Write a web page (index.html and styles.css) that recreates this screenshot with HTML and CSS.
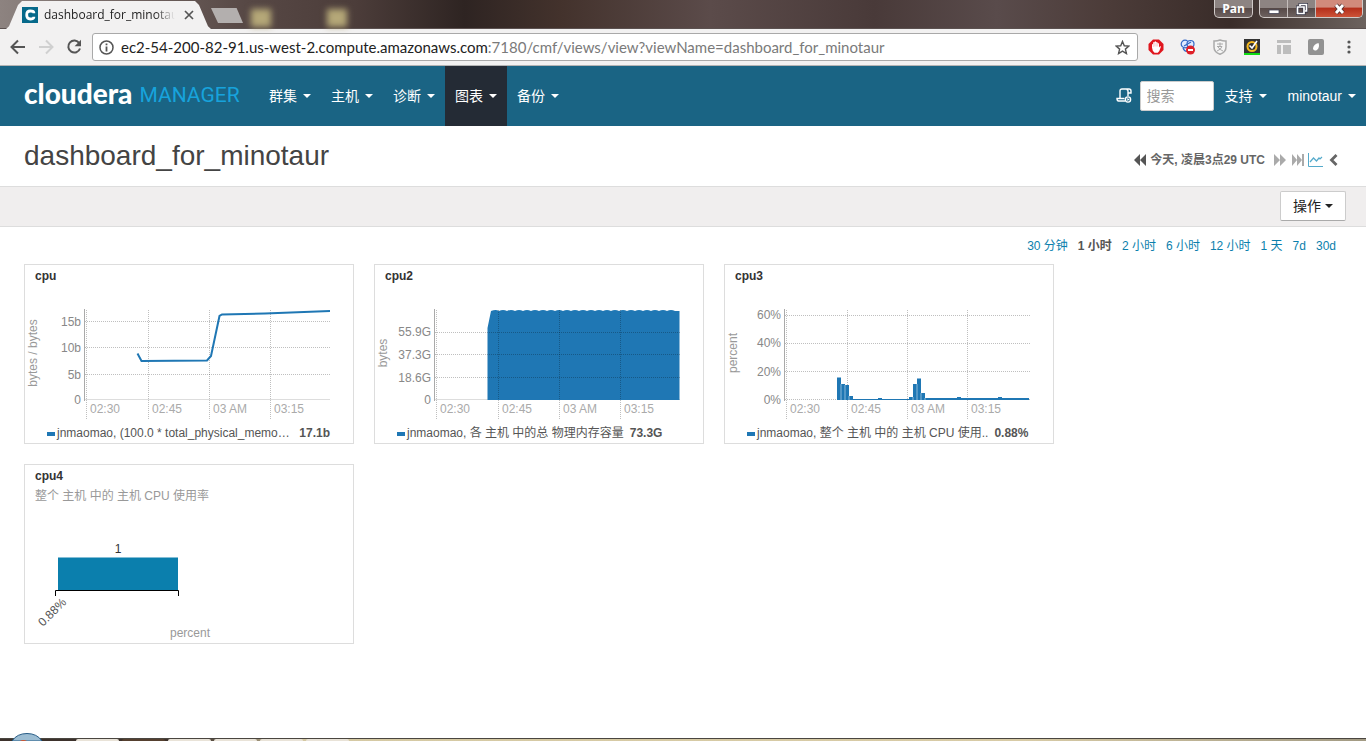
FILE: index.html
```html
<!DOCTYPE html>
<html lang="zh-CN">
<head>
<meta charset="utf-8">
<title>dashboard_for_minotaur</title>
<link rel="stylesheet" href="styles.css">
</head>
<body>
<div class="titlebar">
  <div class="tab">
    <svg class="favicon" width="16" height="16" viewBox="0 0 16 16"><path fill="#06698a" d="M0 0h16v16H0z"/><path d="M11.8 6.3V5.400Q11.300 4 8.300 4Q4.700 4 4.700 8T8.300 12Q11.300 12 11.800 10.300V9.700" fill="none" stroke="#fff" stroke-width="2.800"/></svg>
    <span class="tab-title">dashboard_for_minotaur</span>
    <button class="tab-close" aria-label="Close tab"><svg width="10" height="10" viewBox="0 0 10 10"><path d="M1 1l8 8M9 1l-8 8" stroke="#555" stroke-width="1.700"/></svg></button>
  </div>
  <button class="new-tab" aria-label="New tab"></button>
  <span class="desk-icon"></span><span class="desk-icon second"></span>
  <div class="window-buttons">
    <button class="glass user">Pan</button>
    <div class="glass group">
      <button aria-label="Minimize"><svg width="12" height="12" viewBox="0 0 12 12"><path d="M1 7h10v3.500H1z" fill="#fff" stroke="#445" stroke-width=".8"/></svg></button>
      <button aria-label="Restore"><svg width="12" height="12" viewBox="0 0 12 12"><path d="M4 3V1.500h6.500V8H9M1.500 4H8v6.500H1.500z" fill="none" stroke="#334" stroke-width="3"/><path d="M4 3V1.500h6.500V8H9M1.500 4H8v6.500H1.500z" fill="none" stroke="#fff" stroke-width="1.700"/></svg></button>
      <button class="close" aria-label="Close"><svg width="13" height="12" viewBox="0 0 13 12"><path d="M3 2l7 8M10 2l-7 8" stroke="#533" stroke-width="4.500"/><path d="M3 2l7 8M10 2l-7 8" stroke="#fff" stroke-width="2.800"/></svg></button>
    </div>
  </div>
</div>
<div class="toolbar">
  <div class="nav-buttons">
    <button aria-label="Back"><svg width="16" height="16" viewBox="0 0 16 16"><path d="M15 8H2M8 1.500L1.500 8L8 14.500" fill="none" stroke="#555" stroke-width="2"/></svg></button>
    <button aria-label="Forward"><svg width="16" height="16" viewBox="0 0 16 16"><path d="M1 8h13M8 1.500L14.500 8L8 14.500" fill="none" stroke="#d0d0d0" stroke-width="2"/></svg></button>
    <button aria-label="Reload"><svg width="16" height="16" viewBox="0 0 16 16"><path d="M13.300 4.200A6 6 0 1 0 14 9.500" fill="none" stroke="#555" stroke-width="2"/><path d="M15 .8v6.400H8.600z" fill="#555"/></svg></button>
  </div>
  <div class="omnibox">
    <svg width="15" height="15" viewBox="0 0 15 15"><circle cx="7.500" cy="7.500" r="6.500" fill="none" stroke="#555" stroke-width="1.500"/><path d="M6.600 3.500h1.800v1.800H6.600zM6.600 6.500h1.800v5H6.600z" fill="#555"/></svg>
    <div class="url" role="textbox" aria-label="Address" contenteditable="true" spellcheck="false">ec2-54-200-82-91.us-west-2.compute.amazonaws.com<span>:7180/cmf/views/view?viewName=dashboard_for_minotaur</span></div>
    <button aria-label="Bookmark"><svg width="15" height="15" viewBox="0 0 16 16"><path d="M8 1.500l1.900 4.600 4.900.4-3.700 3.200 1.100 4.800L8 11.900l-4.200 2.600 1.100-4.800L1.200 6.500l4.900-.4z" fill="none" stroke="#555" stroke-width="1.500"/></svg></button>
  </div>
  <div class="extensions">
    <button aria-label="AdBlock"><svg width="16" height="16" viewBox="0 0 16 16"><path d="M5 .5h6L15.500 5v6L11 15.500H5L.5 11V5z" fill="#e0161e"/><path d="M4 8.500V5.500q.7-.8 1.200 0V3.500q.7-.9 1.400 0V2.700q.8-.9 1.500 0v.8q.8-.8 1.500 0v1q.8-.7 1.400 0V8.500l1-1.200q.8-.4 1 .3L11.300 12l-1.500 1.800H6.500L4.800 11.800z" fill="#fff"/><path d="M5.300 5.500v2.500M6.800 4v3.500M8.200 4v3.500M9.700 5v2.500" stroke="#e88" stroke-width=".4"/></svg></button>
    <button aria-label="Proxy"><svg width="16" height="16" viewBox="0 0 16 16"><g fill="#dfeaff" stroke="#3268c7" stroke-width="1.200"><circle cx="5" cy="5" r="3.800"/><circle cx="10.500" cy="5" r="3.500"/><path d="M3 9q1 3 4 3.500M4 7l7-4"/></g><circle cx="10.500" cy="11" r="4.500" fill="#df2029"/><path d="M8 10h5v2H8z" fill="#fff"/></svg></button>
    <button aria-label="Alipay"><svg width="16" height="16" viewBox="0 0 16 16"><path d="M8 1q3 1.200 6 1v6q0 5-6 7.300Q2 13 2 8V2q3 .2 6-1z" fill="#f5f5f5" stroke="#aaa" stroke-width="1.500"/><path d="M5 5h6M8 3.500v3.700M5 7.500h5q-1 3-5 4.500M6 8q2 3 5 4" fill="none" stroke="#aaa"/></svg></button>
    <button aria-label="Norton"><svg width="16" height="16" viewBox="0 0 16 16"><path d="M0 0h16v14H0z" fill="#333"/><path d="M0 14h16v2H0z" fill="#0fdb12"/><circle cx="8" cy="7.500" r="4.500" fill="none" stroke="#f6b91e" stroke-width="2"/><path d="M5.500 6.500L8 9l5-7" fill="none" stroke="#fff" stroke-width="1.600"/></svg></button>
    <button aria-label="Layout"><svg width="16" height="16" viewBox="0 0 16 16"><path d="M1 1h14v3H1zM1 6h4v9H1zM7 6h8v9H7z" fill="#bdbdbd"/></svg></button>
    <button aria-label="Leaf"><svg width="16" height="16" viewBox="0 0 16 16"><rect width="16" height="16" rx="2" fill="#929292"/><path d="M10.500 4q1.500 4-1.500 7-3.500 1.500-4-1.500Q5.500 5 10.500 4z" fill="#fff"/></svg></button>
    <button aria-label="Menu"><svg width="16" height="16" viewBox="0 0 16 16"><g fill="#555"><circle cx="9" cy="3" r="1.600"/><circle cx="9" cy="8" r="1.600"/><circle cx="9" cy="13" r="1.600"/></g></svg></button>
  </div>
</div>

<nav class="navbar">
  <a class="brand" href="#"><b>cloudera</b> <span>MANAGER</span></a>
  <a class="nav-item" href="#">群集<i class="caret"></i></a>
  <a class="nav-item" href="#">主机<i class="caret"></i></a>
  <a class="nav-item" href="#">诊断<i class="caret"></i></a>
  <a class="nav-item active" href="#">图表<i class="caret"></i></a>
  <a class="nav-item" href="#">备份<i class="caret"></i></a>
  <div class="nav-right">
    <a class="commands" href="#" aria-label="命令"><svg width="16" height="16" viewBox="0 0 16 16"><g fill="none" stroke="#fff" stroke-width="1.400"><path d="M4 10V3q0-2 2-2h7q2 0 2 2v2h-3V3q0-1.500-1.500-1.500M12 5v3M9 13H2.500Q1 13 1 10.500h7.500"/><circle cx="12" cy="11.500" r="2.600"/></g><path d="M11.300 10l2.400 1.500-2.400 1.500z" fill="#fff"/></svg></a>
    <input class="search" type="text" placeholder="搜索" aria-label="搜索">
    <a class="nav-item" href="#">支持<i class="caret"></i></a>
    <a class="nav-item" href="#">minotaur<i class="caret"></i></a>
  </div>
</nav>

<header class="page-head">
  <h1>dashboard_for_minotaur</h1>
  <div class="time-controls">
    <button aria-label="后退"><svg width="12" height="12" viewBox="0 0 12 12"><path d="M6 0v12L0 6zM12 0v12L6 6z" fill="#555"/></svg></button>
    <span class="now">今天, 凌晨3点29 UTC</span>
    <button aria-label="前进"><svg width="12" height="12" viewBox="0 0 12 12"><path d="M0 0v12l6-6zM6 0v12l6-6z" fill="#aaa"/></svg></button>
    <button aria-label="当前"><svg width="12" height="12" viewBox="0 0 12 12"><path d="M0 0v12l5-6zM5 0v12l5-6zM10 0h2v12h-2z" fill="#aaa"/></svg></button>
    <button class="tight" aria-label="图表"><svg width="15" height="14" viewBox="0 0 15 14"><path d="M.5 0v13.500H15" fill="none" stroke="#55aacb"/><path d="M2 9l3.500-4 3 3 2.500-3 1 1 2-2" fill="none" stroke="#55aacb" stroke-width="1.200"/></svg></button>
    <button class="tight" aria-label="展开"><svg width="9" height="12" viewBox="0 0 9 12"><path d="M7.500 1L2.500 6l5 5" fill="none" stroke="#666" stroke-width="2.800"/></svg></button>
  </div>
</header>
<div class="action-bar"><button class="action">操作<i class="caret"></i></button></div>

<main class="content">
  <div class="ranges">
    <a href="#">30 分钟</a><strong>1 小时</strong><a href="#">2 小时</a><a href="#">6 小时</a><a href="#">12 小时</a><a href="#">1 天</a><a href="#">7d</a><a href="#">30d</a>
  </div>
  <div class="cards">
    <section class="card">
      <h2>cpu</h2>
      <svg class="chart" width="328" height="137" viewBox="0 0 328 137">
        <path class="base" d="M60 113.500H305"/>
        <path class="grid" d="M60 35.500H305M60 61.500H305M60 88.500H305M61.500 24V134M123.500 24V134M184.500 24V134M245.500 24V134"/>
        <path class="axis" d="M59.500 23V115"/>
        <g class="ylabels"><text x="56" y="40">15b</text><text x="56" y="66">10b</text><text x="56" y="93">5b</text><text x="56" y="118">0</text></g>
        <g class="xlabels"><text x="65" y="127">02:30</text><text x="127" y="127">02:45</text><text x="188" y="127">03 AM</text><text x="249" y="127">03:15</text></g>
        <text class="unit" transform="translate(12 67) rotate(-90)">bytes / bytes</text>
        <path class="line" d="M112.500 67.500L116.500 75L182 74.500L186 70L194.500 30L197 28.500L240 27.500L305 25"/>
      </svg>
      <div class="legend full"><i class="key"></i><span class="name">jnmaomao, (100.0 * total_physical_memo…</span><b>17.1b</b></div>
    </section>
    <section class="card">
      <h2>cpu2</h2>
      <svg class="chart" width="328" height="137" viewBox="0 0 328 137">
        <path class="base" d="M60 113.500H305"/>
        <path class="area" d="M112.500 114V42L116 25q5-2 8 0 4-2 8 0 4-2 8 0 4-2 8 0 4-2 8 0 4-2 8 0 4-2 8 0 4-2 8 0 4-2 8 0 4-2 8 0 4-2 8 0 4-2 8 0 4-2 8 0 4-2 8 0 4-2 8 0 4-2 8 0 4-2 8 0 4-2 8 0 4-2 8 0 4-2 8 0 4-2 8 0 4-2 8 0 4-2 8 0L304.500 25V114z"/>
        <path class="grid" d="M60 46.500H305M60 68.500H305M60 91.500H305M61.500 24V134M123.500 24V134M184.500 24V134M245.500 24V134"/>
        <path class="axis" d="M59.500 23V115"/>
        <g class="ylabels"><text x="56" y="50">55.9G</text><text x="56" y="73">37.3G</text><text x="56" y="96">18.6G</text><text x="56" y="118">0</text></g>
        <g class="xlabels"><text x="65" y="127">02:30</text><text x="127" y="127">02:45</text><text x="188" y="127">03 AM</text><text x="249" y="127">03:15</text></g>
        <text class="unit" transform="translate(12 67) rotate(-90)">bytes</text>
      </svg>
      <div class="legend"><i class="key"></i><span class="name">jnmaomao, 各 主机 中的总 物理内存容量</span><b>73.3G</b></div>
    </section>
    <section class="card">
      <h2>cpu3</h2>
      <svg class="chart" width="328" height="137" viewBox="0 0 328 137">
        <path class="grid" d="M60 29.500H305M60 57.500H305M60 85.500H305M60 113.500H305M61.500 24V134M122.500 24V134M182.500 24V134M242.500 24V134"/>
        <path class="axis" d="M59.500 23V115"/>
        <path class="bars" d="M112 114V91.500h4V114zM116 114V98h4v16zM120 114V99h4v15zM124 114v-4h4v4zM128 114v-1h56v1zM153 114v-2h4v2zM184 114v-3h4v3zM188 114V98h4v16zM192 114V92.500h4V114zM196 114v-7h4v7zM200 114v-2h104v2zM232 114v-3h4v3zM273 114v-3h4v3z"/>
        <path class="bar-gaps" d="M116 98V114M120 99V114M124 110V114M188 111V114M192 98V114M196 107V114M200 112V114"/>
        <g class="ylabels"><text x="56" y="33">60%</text><text x="56" y="61">40%</text><text x="56" y="90">20%</text><text x="56" y="118">0%</text></g>
        <g class="xlabels"><text x="65" y="127">02:30</text><text x="126" y="127">02:45</text><text x="186" y="127">03 AM</text><text x="246" y="127">03:15</text></g>
        <text class="unit" transform="translate(12 67) rotate(-90)">percent</text>
      </svg>
      <div class="legend"><i class="key"></i><span class="name">jnmaomao, 整个 主机 中的 主机 CPU 使用..</span><b>0.88%</b></div>
    </section>
    <section class="card">
      <h2>cpu4</h2>
      <p class="subtitle">整个 主机 中的 主机 CPU 使用率</p>
      <svg class="chart" width="328" height="137" viewBox="0 0 328 137">
        <path class="histogram" d="M33 51.500H153V84H33z"/>
        <path class="bracket" d="M30.500 90V84.500H153.500V90"/>
        <text class="count" x="93" y="47">1</text>
        <text class="bin" transform="translate(18 121) rotate(-45)">0.88%</text>
        <text class="unit" x="165" y="131">percent</text>
      </svg>
    </section>
  </div>
</main>
<footer class="taskbar"><svg class="orb" width="32" height="8" viewBox="0 0 32 8"><path d="M1 8Q6 .5 16 .5T31 8z" fill="#9cbdd3" stroke="#275c86"/><path d="M9 8q3-2 7 0z" fill="#d3542d"/></svg><span></span><span></span><span></span><span></span><span></span><span></span></footer>
</body>
</html>
```
FILE: styles.css
```css
* { box-sizing: border-box; }
body {
  margin: 0;
  min-height: 100vh;
  display: flex;
  flex-direction: column;
  background: #fff;
  color: #555;
  font: 12px/20px "Liberation Sans", "Noto Sans CJK SC", sans-serif;
}
button { padding: 0; border: 0; background: none; font: inherit; color: inherit; cursor: pointer; }
svg { display: block; flex: none; }
a { color: #0b7fad; text-decoration: none; }
h1, h2, p { margin: 0; }

.titlebar {
  display: flex;
  height: 29px;
  padding-left: 6px;
  border-bottom: 1px solid #5b5150;
  background: linear-gradient(90deg, #8d8380 0, #574845 18%, #4c3d3a 26%, #2e2422 34%, #43322c 41%, #5b4b4a 52%, #493a39 64%, #594b4b 73%, #4c3c39 81%, #392c29 90%, #6c625e 100%);
}
.tab {
  display: flex;
  align-items: center;
  gap: 6px;
  width: 205px;
  height: 28px;
  margin-top: 1px;
  padding: 0 14px 0 16px;
  background: #f2f1f1;
  clip-path: polygon(0 100%, 3px 90%, 12px 4px, 16px 0, 189px 0, 193px 4px, 202px 90%, 100% 100%);
}
.tab-title {
  flex: 1;
  overflow: hidden;
  white-space: nowrap;
  color: #222;
  font-family: "Open Sans", "Noto Sans", sans-serif;
  mask-image: linear-gradient(90deg, #000 85%, transparent);
}
.tab-close { width: 16px; display: flex; justify-content: center; }
.new-tab { width: 32px; height: 15px; margin-top: 8px; background: #b3afae; clip-path: polygon(0 0, 80% 0, 100% 100%, 22% 100%); }
.desk-icon { width: 20px; height: 18px; margin: 9px 0 0 8px; background: #b5a878; filter: blur(3px); }
.desk-icon.second { margin-left: 56px; }
.window-buttons { display: flex; gap: 6px; margin-left: auto; padding-right: 3px; }
.glass {
  display: flex;
  height: 18px;
  border: 1px solid #d0cac8;
  border-top: 0;
  border-radius: 0 0 5px 5px;
  overflow: hidden;
  background: linear-gradient(#8d8482 45%, #574a48 50%, #6d615f);
}
.user { width: 39px; justify-content: center; color: #fff; font-weight: bold; line-height: 18px; font-family: "Open Sans", sans-serif; }
.group button { display: flex; align-items: center; justify-content: center; width: 28px; border-right: 1px solid #c4bdbb; }
.group .close { width: 46px; border: 0; background: linear-gradient(#d18a7b 40%, #b5301c 50%, #cc5338); }

.toolbar {
  display: flex;
  align-items: center;
  height: 37px;
  padding: 0 10px;
  background: #f2f1f1;
  border-bottom: 1px solid #b4b4b4;
}
.nav-buttons { display: flex; gap: 12px; width: 82px; }
.omnibox {
  flex: 1;
  min-width: 0;
  display: flex;
  align-items: center;
  gap: 7px;
  height: 28px;
  padding: 0 7px 0 6px;
  background: #fff;
  border: 1px solid #a9a9a9;
  border-radius: 3px;
}
.url { flex: 1; overflow: hidden; white-space: nowrap; color: #222; font: 15px/20px Lato, sans-serif; outline: 0; }
.url span { color: #7a7a7a; }
.extensions { display: flex; gap: 16px; margin-left: 10px; }

.navbar { display: flex; height: 60px; background: #1a6484; color: #fff; }
.brand {
  display: flex;
  flex: none;
  align-items: center;
  gap: 7px;
  width: 259px;
  padding: 0 0 6px 24px;
  color: #fff;
  font: 21px/30px Roboto, sans-serif;
}
.brand b { font-family: Lato, sans-serif; font-size: 28px; font-weight: 900; }
.brand span { color: #17a3dc; padding-top: 4px; }
.nav-item { display: flex; align-items: center; gap: 6px; padding: 0 10px; color: #fff; font-size: 14px; white-space: nowrap; }
.nav-item.active { background: #242b35; }
.caret { border: 4px solid transparent; border-top-color: currentColor; border-bottom: 0; }
.nav-right { display: flex; align-items: center; gap: 1px; margin-left: auto; }
.nav-right .nav-item { height: 100%; }
.commands { margin-right: 7px; }
.search { width: 74px; height: 30px; padding: 0 6px; border: 1px solid #ccc; border-radius: 2px; font: 14px/20px "Liberation Sans", "Noto Sans CJK SC", sans-serif; }
.search::placeholder { color: #999; }

.page-head {
  display: flex;
  align-items: center;
  justify-content: space-between;
  min-height: 61px;
  padding: 0 28px 0 24px;
  border-bottom: 1px solid #ddd;
}
h1 { color: #444; font-size: 28px; font-weight: normal; line-height: 40px; }
.time-controls { display: flex; align-items: center; gap: 4px; padding-top: 8px; font-weight: bold; }
.time-controls .now { margin-right: 5px; color: #666; }
.time-controls button + button { margin-left: 2px; }
.time-controls .tight { margin-left: 0; }
.time-controls .tight:last-child { margin-left: 2px; }
.action-bar { display: flex; justify-content: flex-end; padding: 4px 20px 5px; background: #f0eeee; border-bottom: 1px solid #ddd; }
.action {
  display: flex;
  align-items: center;
  justify-content: center;
  gap: 4px;
  width: 66px;
  height: 30px;
  border: 1px solid #ccc;
  border-bottom-color: #aaa;
  border-radius: 2px;
  background: #fff;
  color: #222;
  font-size: 14px;
}

.content { flex: 1; padding: 9px 24px 20px; }
.ranges { display: flex; justify-content: flex-end; gap: 10px; margin-bottom: 8px; padding-right: 6px; }
.cards { display: grid; grid-template-columns: repeat(auto-fill, 330px); gap: 20px; }
.card { padding-top: 1px; border: 1px solid #ddd; }
.card h2 { padding-left: 10px; color: #333; font-size: 12px; line-height: 20px; }
.subtitle { padding-left: 10px; color: #999; }
.chart { font-size: 12px; }
.grid, .base, .axis, .line, .bracket { fill: none; }
.grid { stroke: rgba(0, 0, 0, .25); stroke-dasharray: 1 1; }
.base { stroke: #ddd; }
.axis { stroke: #aaa; }
.line { stroke: #1f77b4; stroke-width: 2; }
.area, .bars { fill: #1f77b4; }
.bar-gaps { stroke: #8bbada; stroke-width: 1; }
.bracket { stroke: #000; }
.histogram { fill: #0b7fad; }
.ylabels { fill: #888; text-anchor: end; }
.xlabels { fill: #aaa; }
.unit { fill: #999; text-anchor: middle; }
.count { fill: #333; text-anchor: middle; }
.bin { fill: #555; }
.legend { display: flex; align-items: center; padding: 0 23px 0 22px; white-space: nowrap; }
.legend.full .name { flex: 1; }
.key { flex: none; width: 8px; height: 4px; margin: 2px 2px 0 0; background: #1f77b4; }
.legend b { margin-left: 6px; }

.taskbar {
  position: relative;
  display: flex;
  gap: 3px;
  height: 3px;
  padding-left: 76px;
  border-top: 1px solid #4a4640;
  background: linear-gradient(90deg, #3d322c 0, #3d322c 14%, #d5c9a3 22%, #d8cba6 75%, #a29a83 100%);
}
.taskbar span { width: 43px; background: #e9e3d8; border-radius: 2px 2px 0 0; }
.taskbar span:nth-of-type(2) { background: #55402f; }
.orb { position: absolute; left: 11px; bottom: 0; }
```
